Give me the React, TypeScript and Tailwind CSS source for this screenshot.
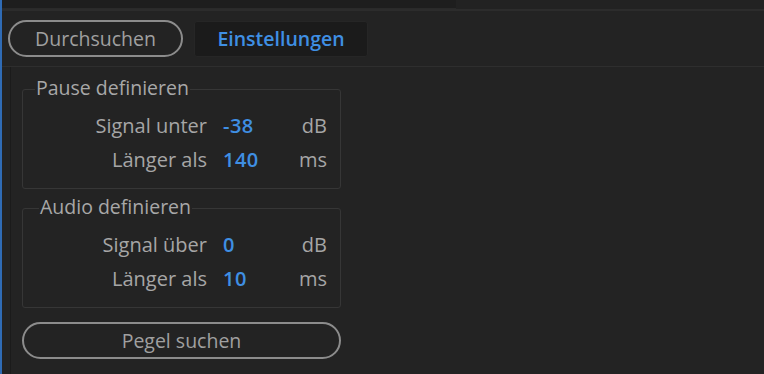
import React from "react";

const Row = ({ label, value, unit }: { label: string; value: string; unit: string }) => (
  <div className="flex items-center h-[34px] text-[20px]">
    <span className="w-[184px] text-right text-[#a6a6a6]">{label}</span>
    <span className="w-[78px] pl-[16px] text-[#3f8fe3] font-semibold tracking-[0.5px]">{value}</span>
    <span className="w-[42px] text-right text-[#a6a6a6]">{unit}</span>
  </div>
);

const Group = ({ title, left, children }: { title: string; left: string; children: React.ReactNode }) => (
  <div className="relative ml-[11px] w-[319px] h-[100px] border border-[#363636] rounded-[3px]">
    <span className={`absolute -top-[14px] px-[1px] bg-[#232323] leading-[24px] text-[19.5px] text-[#a8a8a8] ${left}`}>
      {title}
    </span>
    <div className="pt-[19px]">{children}</div>
  </div>
);

const App = () => {
  return (
    <div
      className="w-[764px] h-[374px] bg-[#232323] flex overflow-hidden text-[19px] font-medium"
      style={{ fontFamily: '"Open Sans", "Noto Sans", sans-serif' }}
    >
      <div className="w-[2px] bg-[#2f6bb5]" />
      <div className="flex-1 flex flex-col">
        <div className="h-[9px] flex">
          <div className="w-[454px] bg-[#1e1e1e] border-b border-[#2a2a2a]" />
          <div className="flex-1 bg-[#222222]" />
        </div>
        <div className="h-[2px] bg-[#2c2c2c]" />
        <div className="flex items-center gap-[11px] pl-[6px] h-[55px]">
          <button className="w-[175px] h-[37px] rounded-full border-2 border-[#8c8c8c] text-[#a0a0a0] text-[19.5px] font-medium">
            Durchsuchen
          </button>
          <button className="w-[174px] h-[36px] rounded-[3px] bg-[#1b1b1b] border border-[#262626] text-[#3f8fe3] text-[19.5px] font-semibold">
            Einstellungen
          </button>
        </div>
        <div className="h-[1px] bg-[#2e2e2e]" />
        <div className="flex-1 flex">
          <div className="ml-[8px] w-[1px] bg-[#1b1b1b]" />
          <div className="flex-1 flex flex-col pt-[22px]">
            <Group title="Pause definieren" left="left-[12px]">
              <Row label="Signal unter" value="-38" unit="dB" />
              <Row label="Länger als" value="140" unit="ms" />
            </Group>
            <div className="h-[19px]" />
            <Group title="Audio definieren" left="left-[16px]">
              <Row label="Signal über" value="0" unit="dB" />
              <Row label="Länger als" value="10" unit="ms" />
            </Group>
            <button className="mt-[14px] ml-[11px] w-[319px] h-[37px] rounded-full border-2 border-[#8c8c8c] text-[#a0a0a0] text-[19.5px] font-medium">
              Pegel suchen
            </button>
          </div>
        </div>
      </div>
    </div>
  );
};

export default App;
